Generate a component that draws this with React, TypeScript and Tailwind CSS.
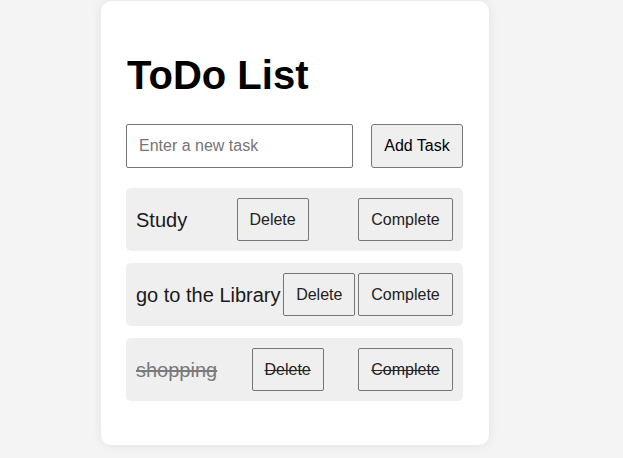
import { useState } from "react";

type Task = { id: number; text: string; done: boolean };

const initialTasks: Task[] = [
  { id: 1, text: "Study", done: false },
  { id: 2, text: "go to the Library", done: false },
  { id: 3, text: "shopping", done: true },
];

const App = () => {
  const [tasks, setTasks] = useState<Task[]>(initialTasks);
  const [value, setValue] = useState("");

  const addTask = () => {
    if (!value.trim()) return;
    setTasks([...tasks, { id: Date.now(), text: value.trim(), done: false }]);
    setValue("");
  };

  return (
    <div className="min-h-screen bg-[#f4f4f4] pl-[101px] pt-[1px] font-['Liberation_Sans',Arial,sans-serif] text-black">
      <div className="w-[388px] rounded-[10px] bg-white pl-[25px] pr-[26px] pt-[51px] pb-[44px] shadow-[0_0_12px_rgba(0,0,0,0.08)]">
        <h1 className="pl-[1px] text-[40px] font-bold leading-[46px]">ToDo List</h1>

        <div className="mt-[26px] flex items-center justify-between">
          <input
            value={value}
            onChange={(e) => setValue(e.target.value)}
            placeholder="Enter a new task"
            className="h-[44px] w-[227px] rounded-[2px] border border-[#767676] bg-white px-3 text-[16px] outline-none placeholder:text-[#757575]"
          />
          <button
            onClick={addTask}
            className="h-[44px] w-[92px] rounded-[3px] border border-[#767676] bg-[#efefef] text-[16px]"
          >
            Add Task
          </button>
        </div>

        <ul className="mt-[20px] flex flex-col gap-[12px]">
          {tasks.map((t) => (
            <li
              key={t.id}
              className="flex h-[63px] items-center justify-between rounded-[5px] bg-[#efefef] px-[10px]"
            >
              <span
                className={
                  t.done
                    ? "text-[20px] text-[#7a7a7a] line-through"
                    : "text-[20px] text-[#1a1a1a]"
                }
              >
                {t.text}
              </span>
              <button
                onClick={() => setTasks(tasks.filter((x) => x.id !== t.id))}
                className={
                  t.done
                    ? "h-[43px] w-[72px] rounded-[2px] border border-[#767676] bg-[#efefef] text-[16px] text-[#222] line-through"
                    : "h-[43px] w-[72px] rounded-[2px] border border-[#767676] bg-[#efefef] text-[16px] text-[#222]"
                }
              >
                Delete
              </button>
              <button
                onClick={() =>
                  setTasks(tasks.map((x) => (x.id === t.id ? { ...x, done: !x.done } : x)))
                }
                className={
                  t.done
                    ? "h-[43px] w-[95px] rounded-[2px] border border-[#767676] bg-[#efefef] text-[16px] text-[#222] line-through"
                    : "h-[43px] w-[95px] rounded-[2px] border border-[#767676] bg-[#efefef] text-[16px] text-[#222]"
                }
              >
                Complete
              </button>
            </li>
          ))}
        </ul>
      </div>
    </div>
  );
};

export default App;
